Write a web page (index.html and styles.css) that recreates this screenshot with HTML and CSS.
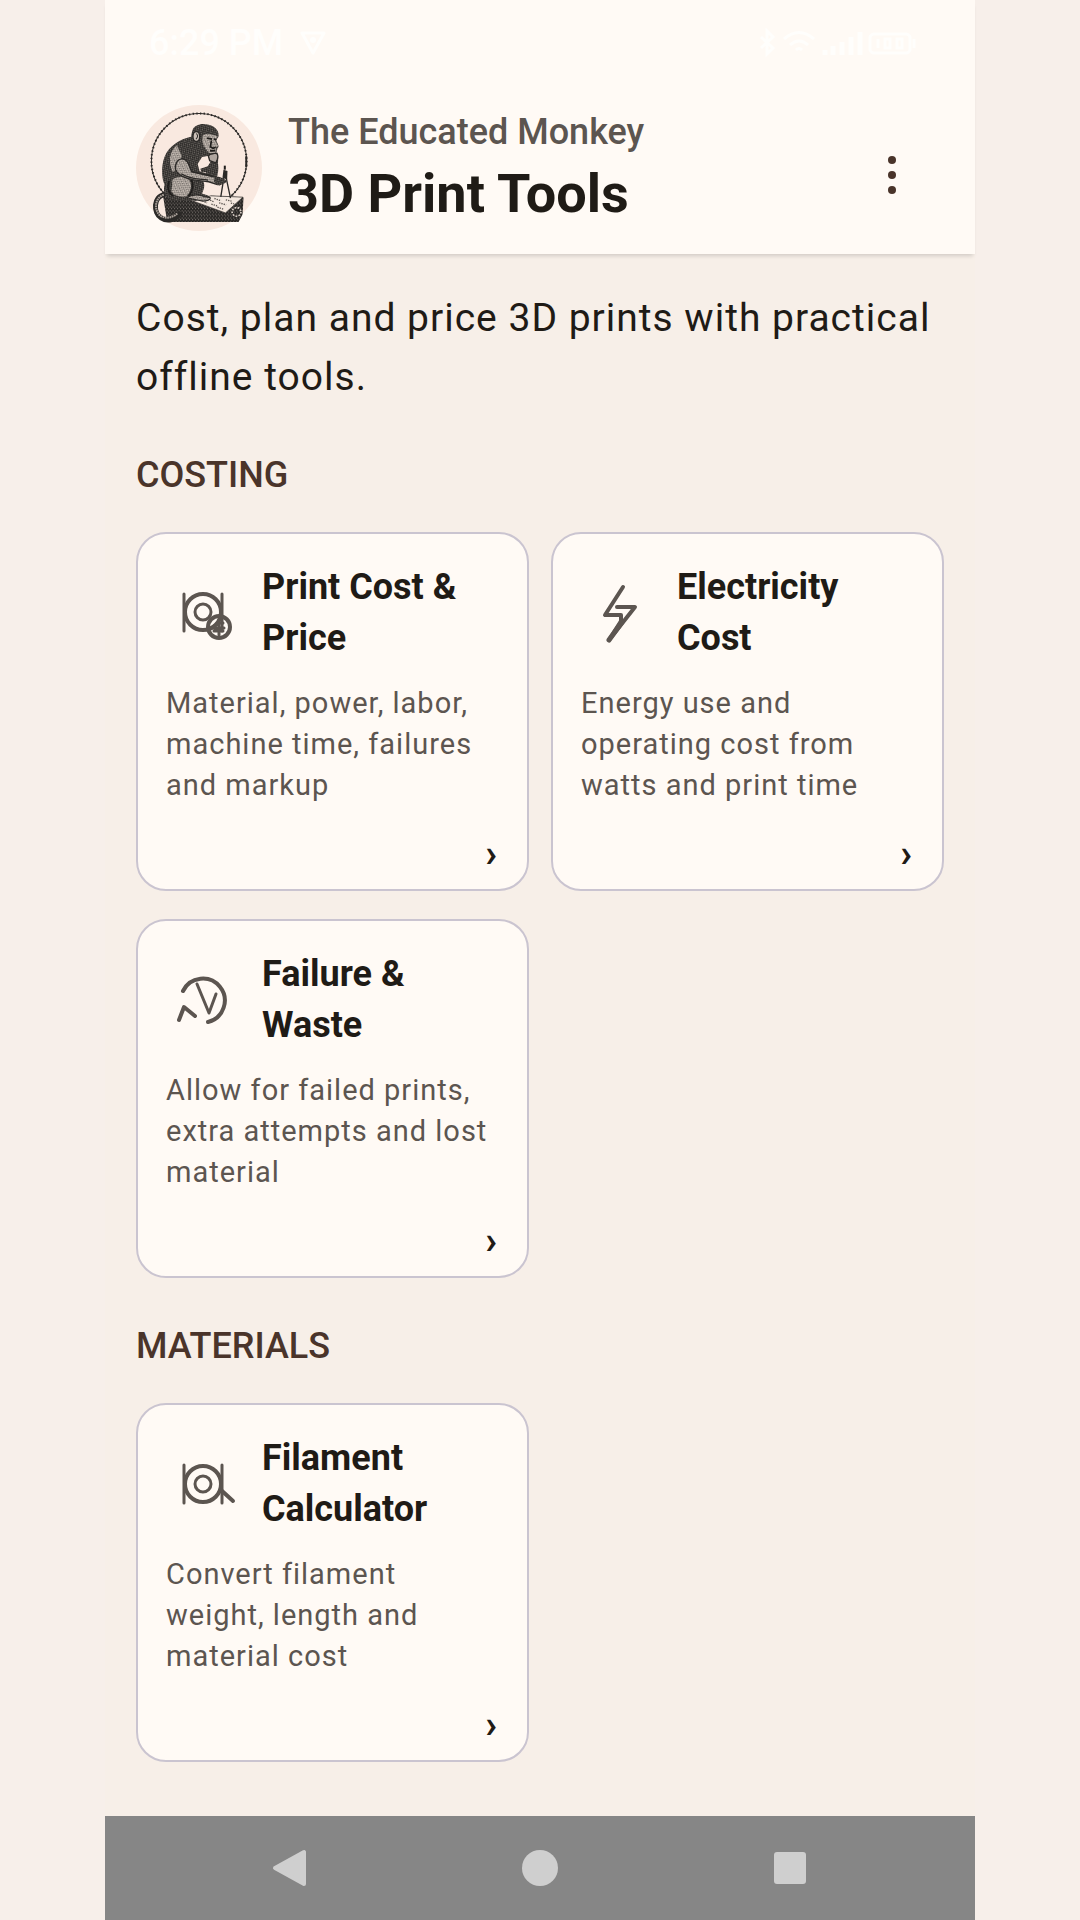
FILE: index.html
```html
<!DOCTYPE html>
<html lang="en">
<head>
  <meta charset="UTF-8" />
  <meta name="viewport" content="width=device-width, initial-scale=1.0" />
  <title>3D Print Tools</title>
  <link rel="stylesheet" href="styles.css">
</head>
<body>
  <div class="screen">
    <header class="app-bar">
      <div class="status-bar">
        <span class="clock">6:29 PM</span>
        <svg class="vpn" width="28" height="26" viewBox="0 0 28 26"><path d="M3 3h22L14 23z" fill="none" stroke="currentColor" stroke-width="3" stroke-linejoin="round" /><circle cx="14" cy="10" r="3" fill="currentColor" /></svg>
        <svg class="indicators" width="160" height="30" viewBox="0 0 160 30" fill="none" stroke="currentColor" stroke-width="3">
          <path d="M2 9l12 11-6 6V3l6 6L2 20" />
          <path d="M25 11q15-13 30 0M31 17q9-8 18 0M37 22q3-3 6 0" />
          <path d="M66 22v5M74 18v9M83 14v13M92 9v18M101 4v23" stroke-width="5" />
          <rect x="111" y="6" width="40" height="19" rx="4" />
          <path d="M155 11v9M119 11v9M126 11h5v9h-5zM138 11h5v9h-5z" />
        </svg>
      </div>
      <div class="title-row">
        <svg class="avatar" viewBox="17 17 376 376" role="img" aria-label="Monkey drawing with a compass">
          <defs>
            <pattern id="fur" width="9" height="8" patternUnits="userSpaceOnUse" patternTransform="rotate(58)">
              <rect width="9" height="8" fill="#2b2927" />
              <path d="M0 2h4M5 6h3" stroke="#9b938c" stroke-width="2" />
            </pattern>
            <pattern id="light-fur" width="9" height="7" patternUnits="userSpaceOnUse" patternTransform="rotate(-35)">
              <rect width="9" height="7" fill="#c9bfb7" />
              <path d="M0 2h5M5 5h3" stroke="#3a3734" stroke-width="2" />
            </pattern>
            <pattern id="wood" width="9" height="11" patternUnits="userSpaceOnUse">
              <rect width="9" height="11" fill="#262422" />
              <path d="M2 0v5M6 5v4" stroke="#968e87" stroke-width="2" />
            </pattern>
          </defs>
          <circle cx="205" cy="205" r="188" fill="#f9e9e0" />
          <circle cx="205" cy="184" r="142" fill="none" stroke="#2b2927" stroke-width="3" />
          <circle cx="205" cy="184" r="142" fill="none" stroke="#2b2927" stroke-width="6" stroke-dasharray="4 7" />
          <path d="M346 170v32" stroke="#2b2927" stroke-width="6" />
          <!-- block and paper -->
          <path d="M98 290l92 12 52-14 96 4-3 52-12 22H110z" fill="url(#wood)" />
          <path d="M188 304l52-16 96 4-52 47z" fill="#f4e8df" stroke="#2b2927" stroke-width="2" />
          <path d="M215 303l14 6M232 298l17 8M251 296l20 7M242 313l17 5M265 309l21 6M260 322l19 6M285 300l17 4M300 310l10 2" stroke="#5a544f" stroke-width="4" stroke-dasharray="4 3" />
          <circle cx="317" cy="336" r="13" fill="none" stroke="#d8cdc5" stroke-width="5" stroke-dasharray="5 4" />
          <path d="M102 284c-34 6-34 55-10 70 20 13 46 4 54-12" fill="none" stroke="#2b2927" stroke-width="15" stroke-linecap="round" />
          <path d="M100 285c-29 8-30 51-8 64 17 9 38 2 48-8" fill="none" stroke="#aaa099" stroke-width="6" stroke-dasharray="5 2" />
          <!-- body -->
          <path d="M184 111c-38 8-69 29-82 61-11 30-8 65 0 82-4 18 0 34 10 42 15 6 56 9 82 4 28 5 46 1 45-7-4-8-16-8-25-12 8-17 10-29 0-45l43 3c10-30 8-60-11-80z" fill="url(#fur)" />
          <path d="M214 172l33-6 1 10-15 25-8 20-18-6-6-22z" fill="#f9e9e0" />
          <path d="M139 137c-23 18-27 52-12 80 15-8 24-31 26-50z" fill="url(#light-fur)" />
          <path d="M126 239c20-14 49-8 54 10 3 13-2 31-13 41-22 2-38-2-44-16z" fill="url(#light-fur)" />
          <path d="M180 237c11 17 6 38-7 54M116 244c-9 24-2 36 12 45" fill="none" stroke="#1f1d1b" stroke-width="5" />
          <path d="M140 185c10-12 27-9 34 9l9 22 70 16c12 0 23 3 29 15-6 4-13 2-18 0 2 5-1 9-6 7l-24-8c-27-2-64-5-85-20-17-12-18-27-9-41z" fill="url(#light-fur)" stroke="#2b2927" stroke-width="4" />
          <path d="M152 222c27 18 53 15 80 19M182 216l61 13" fill="none" stroke="#2b2927" stroke-width="4" />
          <path d="M212 217c35 5 52-8 50-40l-2-18-18 2 2 19-13 20-22 7z" fill="url(#fur)" />
          <path d="M168 294c17-11 39-11 54-3l16 2c4 8-15 13-31 9z" fill="url(#light-fur)" stroke="#2b2927" stroke-width="3" />
          <!-- head -->
          <path d="M186 91c4-14 27-22 48-15 21 4 33 22 29 36-1 5-7 7-6 12l6 14c2 6-4 8-4 13-1 10-9 18-19 17-16 0-23-12-34-24-12-4-20-11-23-23-3-10 0-20 3-30z" fill="url(#fur)" />
          <path d="M216 108c13-8 26-4 44 2-2 8-7 9-6 15l8 14-6 5 1 14c-8 10-21 5-27-4-9-10-15-23-15-31z" fill="url(#light-fur)" />
          <path d="M229 116l15 3M249 119l8 1M242 123l-3 19 8 4 8-3M238 154l16-1" fill="none" stroke="#1f1d1b" stroke-width="5" />
          <ellipse cx="197" cy="111" rx="10" ry="15" fill="#cabfb7" stroke="#2b2927" stroke-width="4" />
          <path d="M197 102q8 8-1 17" fill="none" stroke="#2b2927" stroke-width="3" />
          <path d="M233 169c4-9 15-5 20-8 8-1 10 8 7 18l-5 11-18-7z" fill="#b0a69f" stroke="#2b2927" stroke-width="4" />
          <!-- compass -->
          <path d="M282 198v12" stroke="#1f1d1b" stroke-width="6" />
          <path d="M278 210l12 4-1 25-14-5z" fill="#2b2927" />
          <path d="M279 235l-9 56M286 234l13 61" fill="none" stroke="#2b2927" stroke-width="4" />
          <path d="M251 233l24 2 14 8-5 6-19 9-16-12z" fill="url(#fur)" />
        </svg>
        <div class="titles">
          <p class="brand">The Educated Monkey</p>
          <h1>3D Print Tools</h1>
        </div>
        <button class="menu" type="button" aria-label="More options">
          <svg width="12" height="40" viewBox="0 0 12 40" fill="currentColor"><circle cx="6" cy="5" r="4" /><circle cx="6" cy="20" r="4" /><circle cx="6" cy="35" r="4" /></svg>
        </button>
      </div>
    </header>

    <main>
      <p class="intro">Cost, plan and price 3D prints with practical offline tools.</p>

      <section>
        <h2>COSTING</h2>
        <div class="cards">
          <a class="card" href="#print-cost">
            <div class="card-head">
              <svg class="icon" viewBox="0 0 72 72">
                <path d="M18 17v37M56 17v37" stroke-width="3" />
                <circle cx="37" cy="35" r="18" stroke-width="4" />
                <circle cx="37" cy="35" r="8" stroke-width="3" />
                <circle cx="53" cy="50" r="11" stroke-width="4" />
                <path d="M53 43v15M57 46h-5l-6 5h12M48 54h9" stroke-width="3" />
              </svg>
              <h3>Print Cost &amp; Price</h3>
            </div>
            <p>Material, power, labor, machine time, failures and markup</p>
            <span class="arrow">›</span>
          </a>
          <a class="card" href="#electricity">
            <div class="card-head">
              <svg class="icon" viewBox="0 0 72 72">
                <path d="M42 10L24 38h16v6L28 63l26-33H36" stroke-width="4" />
                <path d="M28 63l13-18" stroke-width="5" />
              </svg>
              <h3>Electricity Cost</h3>
            </div>
            <p>Energy use and operating cost from watts and print time</p>
            <span class="arrow">›</span>
          </a>
          <a class="card" href="#waste">
            <div class="card-head">
              <svg class="icon" viewBox="0 0 72 72">
                <path d="M17 27a22 22 0 1 1 25 31M13 56l5-13 11 9" stroke-width="4" />
                <path d="M31 20l12 29 7-19" stroke-width="3" />
              </svg>
              <h3>Failure &amp; Waste</h3>
            </div>
            <p>Allow for failed prints, extra attempts and lost material</p>
            <span class="arrow">›</span>
          </a>
        </div>
      </section>

      <section>
        <h2>MATERIALS</h2>
        <div class="cards">
          <a class="card" href="#filament">
            <div class="card-head">
              <svg class="icon" viewBox="0 0 72 72">
                <path d="M18 17v38M56 17v38" stroke-width="3" />
                <circle cx="37" cy="36" r="18" stroke-width="4" />
                <circle cx="37" cy="36" r="8" stroke-width="3" />
                <path d="M55 42l12 11" stroke-width="4" />
              </svg>
              <h3>Filament Calculator</h3>
            </div>
            <p>Convert filament weight, length and material cost</p>
            <span class="arrow">›</span>
          </a>
        </div>
      </section>
    </main>

    <nav class="nav-bar">
      <button type="button" aria-label="Back"><svg width="38" height="38" viewBox="0 0 38 38"><path d="M4 19L33 3v32z" stroke="currentColor" stroke-width="4" stroke-linejoin="round" /></svg></button>
      <button type="button" aria-label="Home"><svg width="38" height="38" viewBox="0 0 38 38"><circle cx="19" cy="19" r="18" /></svg></button>
      <button type="button" aria-label="Recent apps"><svg width="38" height="38" viewBox="0 0 38 38"><rect x="3" y="3" width="32" height="32" rx="3" /></svg></button>
    </nav>
  </div>
</body>
</html>
```
FILE: styles.css
```css
* {
  box-sizing: border-box;
}
body {
  margin: 0;
  font-family: Roboto, sans-serif;
  background: #f7efea;
  color: #1f1b16;
}
h1, h2, h3, p {
  margin: 0;
}
button {
  padding: 0;
  border: none;
  background: none;
  cursor: pointer;
}
svg {
  display: block;
}
.screen {
  display: flex;
  flex-direction: column;
  max-width: 870px;
  min-height: 100vh;
  margin: 0 auto;
  background: #f7efe8;
}

/* top bar */
.app-bar {
  background: #fffaf5;
  box-shadow: 0 4px 4px -2px rgba(0, 0, 0, 0.15);
}
.status-bar {
  display: flex;
  align-items: center;
  gap: 16px;
  height: 85px;
  padding: 0 56px 0 44px;
  color: #fffefc;
}
.clock {
  font-size: 36px;
  font-weight: 500;
}
.indicators {
  margin-left: auto;
}
.title-row {
  display: flex;
  align-items: center;
  gap: 26px;
  padding: 20px 31px 23px;
}
.avatar {
  flex: none;
  width: 126px;
  height: 126px;
}
.titles {
  flex: 1;
}
.brand {
  font-size: 36px;
  font-weight: 500;
  line-height: 52px;
  color: #5c5550;
}
h1 {
  font-size: 54px;
  font-weight: 700;
  line-height: 72px;
}
.menu {
  display: flex;
  align-self: flex-end;
  align-items: center;
  justify-content: center;
  width: 104px;
  height: 112px;
  color: #4a342a;
}

/* tool list */
main {
  padding: 35px 31px 50px;
}
.intro {
  font-size: 39px;
  line-height: 59px;
  letter-spacing: 1px;
}
h2 {
  margin: 43px 0 32px;
  font-size: 36px;
  font-weight: 500;
  line-height: 50px;
  color: #4a342a;
}
.cards {
  display: grid;
  grid-template-columns: 1fr 1fr;
  gap: 28px 22px;
}
.card {
  display: flex;
  flex-direction: column;
  padding: 28px 28px 16px;
  border: 2px solid #cac4d0;
  border-radius: 30px;
  background: #fffaf5;
  color: inherit;
  text-decoration: none;
}
.card-head {
  display: flex;
  align-items: center;
  gap: 24px;
}
.icon {
  flex: none;
  width: 72px;
  height: 72px;
  fill: none;
  stroke: #5c5550;
  stroke-linecap: round;
  stroke-linejoin: round;
}
h3 {
  font-size: 36px;
  font-weight: 700;
  line-height: 51px;
}
.card p {
  margin: 19px 0 27px;
  font-size: 29px;
  line-height: 41px;
  letter-spacing: 1px;
  color: #5c5550;
}
.arrow {
  align-self: flex-end;
  margin-top: auto;
  padding-right: 2px;
  font-size: 39px;
  font-weight: 700;
  line-height: 40px;
}

/* system navigation */
.nav-bar {
  display: grid;
  grid-template-columns: repeat(3, 1fr);
  height: 104px;
  margin-top: auto;
  padding: 0 60px;
  background: #868686;
}
.nav-bar button {
  display: flex;
  align-items: center;
  justify-content: center;
  color: #cfcfcf;
}
.nav-bar svg {
  fill: currentColor;
}
```
